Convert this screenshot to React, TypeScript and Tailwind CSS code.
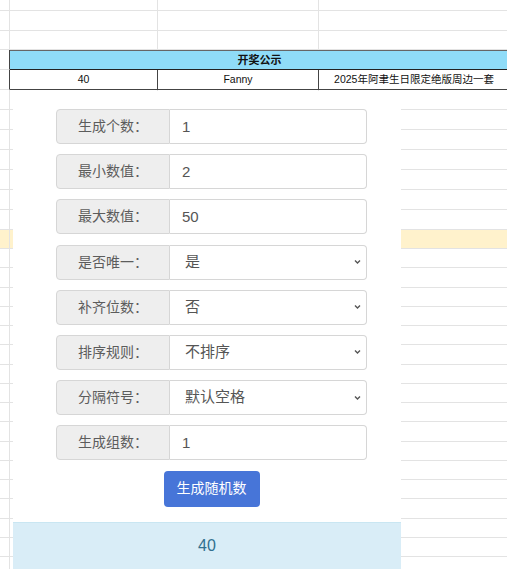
import React from "react";

const FONT = "font-['Liberation_Sans','Noto_Sans_CJK_SC',sans-serif]";

const FIELDS: { label: string; kind: "input" | "select"; value: string; options?: string[] }[] = [
  { label: "生成个数：", kind: "input", value: "1" },
  { label: "最小数值：", kind: "input", value: "2" },
  { label: "最大数值：", kind: "input", value: "50" },
  { label: "是否唯一：", kind: "select", value: "是", options: ["是", "否"] },
  { label: "补齐位数：", kind: "select", value: "否", options: ["否", "是"] },
  { label: "排序规则：", kind: "select", value: "不排序", options: ["不排序", "从小到大", "从大到小"] },
  { label: "分隔符号：", kind: "select", value: "默认空格", options: ["默认空格", "逗号", "换行"] },
  { label: "生成组数：", kind: "input", value: "1" },
];

// sheet rows under the dialog
const TOP_ROWS = ["h-[11px]", "h-5", "h-[19px]"];
const BODY_ROWS: { h: string; yellow?: boolean }[] = [
  ...Array.from({ length: 7 }, () => ({ h: "h-5" })),
  { h: "h-[19px]", yellow: true },
  ...Array.from({ length: 18 }, () => ({ h: "h-[19.25px]" })),
];

function SheetRow({ h, yellow }: { h: string; yellow?: boolean }) {
  return (
    <div className={`flex shrink-0 ${h} border-b border-[#e3e3e3] ${yellow ? "bg-[#fff2cc]" : ""}`}>
      <div className="w-[10px] shrink-0 border-r border-[#e3e3e3]" />
      <div className="w-[148px] shrink-0 border-r border-[#e3e3e3]" />
      <div className="w-[161px] shrink-0 border-r border-[#e3e3e3]" />
      <div className="flex-1" />
    </div>
  );
}

function Field({ f }: { f: (typeof FIELDS)[number] }) {
  return (
    <div className="flex h-[35px] w-full">
      <div className="flex w-[114px] shrink-0 items-center justify-center rounded-l-[4px] border border-[#d6d6d6] bg-[#eeeeee] text-[14px] text-[#5c5c5c]">
        {f.label}
      </div>
      {f.kind === "input" ? (
        <input
          defaultValue={f.value}
          className="h-full min-w-0 flex-1 rounded-r-[4px] border border-l-0 border-[#d6d6d6] bg-white pl-[12px] text-[15px] text-[#555] outline-none"
        />
      ) : (
        <div className="relative flex-1">
          <select
            defaultValue={f.value}
            className="h-full w-full appearance-none rounded-r-[4px] border border-l-0 border-[#d6d6d6] bg-white pl-[15px] text-[15px] text-[#555] outline-none"
          >
            {f.options!.map((o) => (
              <option key={o}>{o}</option>
            ))}
          </select>
          <svg
            className="pointer-events-none absolute right-[6px] top-1/2 -translate-y-1/2"
            width="7"
            height="5"
            viewBox="0 0 7 5"
          >
            <path d="M1 1 L3.5 3.5 L6 1" fill="none" stroke="#555" strokeWidth="1.4" />
          </svg>
        </div>
      )}
    </div>
  );
}

export default function App() {
  return (
    <div className={`relative h-[569px] w-full overflow-hidden bg-white ${FONT}`}>
      {/* spreadsheet behind */}
      <div className="flex flex-col">
        {TOP_ROWS.map((h, i) => (
          <SheetRow key={i} h={h} />
        ))}

        {/* 开奖公示 table */}
        <div className="flex h-5 shrink-0">
          <div className="w-[10px] shrink-0 border-r border-b border-r-[#444] border-b-[#e3e3e3]" />
          <div className="flex w-[499px] shrink-0 items-center justify-center border-y border-t-[#666] border-b-[#222] bg-[#8fdcf8] text-[11px] font-bold text-[#111]">
            开奖公示
          </div>
        </div>
        <div className="flex h-5 shrink-0">
          <div className="w-[10px] shrink-0 border-r border-b border-r-[#444] border-b-[#e3e3e3]" />
          <div className="flex w-[148px] shrink-0 items-center justify-center border-r border-b border-[#444] text-[10.5px] text-[#111]">
            40
          </div>
          <div className="flex w-[161px] shrink-0 items-center justify-center border-r border-b border-[#444] text-[10.5px] text-[#111]">
            Fanny
          </div>
          <div className="flex w-[190px] shrink-0 items-center justify-center border-b border-[#444] text-[10.5px] text-[#111]">
            2025年阿聿生日限定绝版周边一套
          </div>
        </div>

        {BODY_ROWS.map((r, i) => (
          <SheetRow key={i} h={r.h} yellow={r.yellow} />
        ))}
      </div>

      {/* random number dialog */}
      <div className="absolute bottom-0 left-[13px] top-[91px] flex w-[388px] flex-col bg-white">
        <div className="ml-[43px] mt-[18px] flex w-[311px] flex-col gap-[10.2px]">
          {FIELDS.map((f) => (
            <Field key={f.label} f={f} />
          ))}
          <div className="flex justify-center">
            <button className="h-[36px] rounded-[4px] bg-[#4775d8] px-[13px] text-[14px] text-white">
              生成随机数
            </button>
          </div>
        </div>
        <div className="mt-[15px] flex h-[50px] items-center justify-center border-t border-[#c9e6f2] bg-[#d9edf7] text-[16px] text-[#31708f]">
          40
        </div>
      </div>
    </div>
  );
}
